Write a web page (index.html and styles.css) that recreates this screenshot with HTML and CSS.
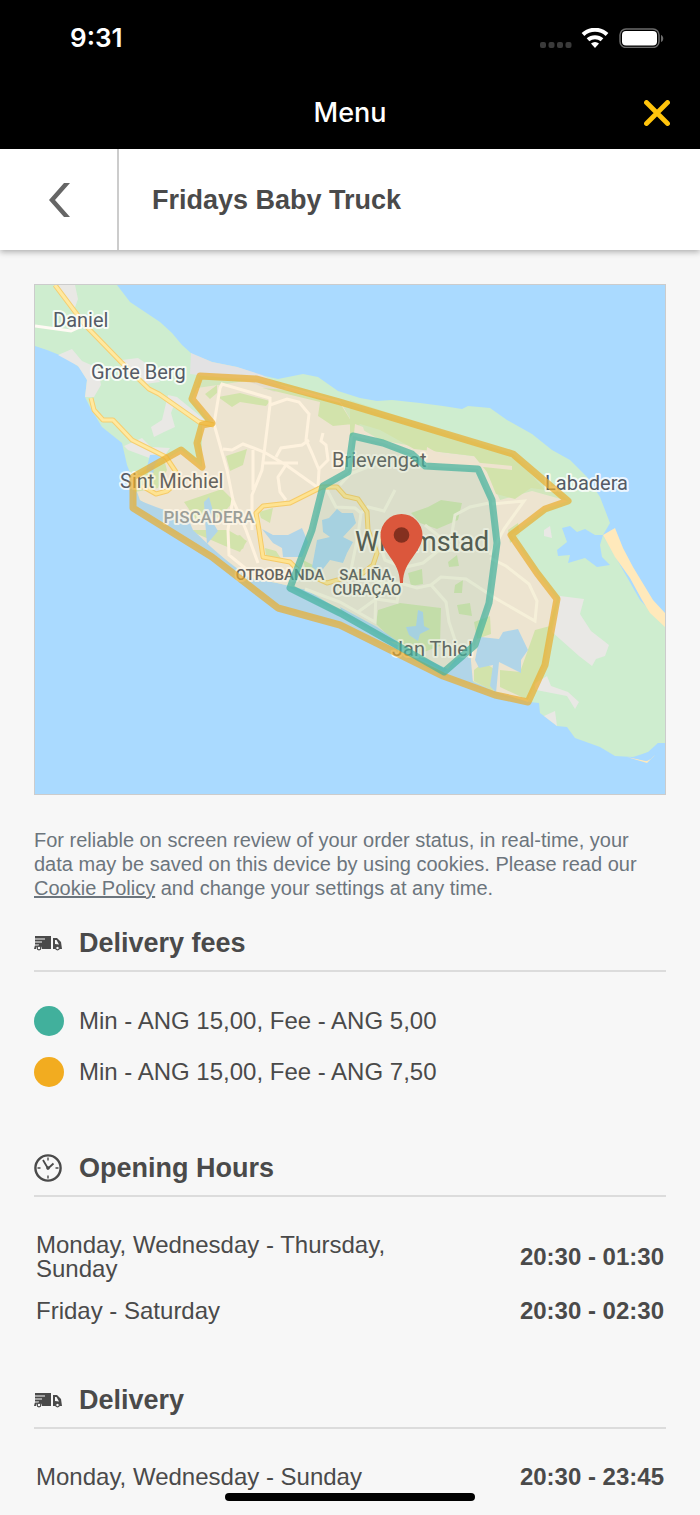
FILE: index.html
```html
<!DOCTYPE html>
<html lang="en">
<head>
    <meta charset="UTF-8">
    <meta name="viewport" content="width=device-width, initial-scale=1.0">
    <title>Fridays Baby Truck</title>
    <link rel="stylesheet" href="styles.css">
</head>
<body>
<svg class="symbols" aria-hidden="true">
    <symbol id="truck" viewBox="0 0 28 16">
        <path fill="#4a4a4a" d="M1 1h16v13H8a3 3 0 0 0-6 0H0l1-4zM19 3h4l4 4 1 7h-9z"/>
        <path fill="#f7f7f7" d="M0 3.400h11v1H0zM0 6.400h8v1H0zM0 9.400h5v1H0zM21 5h1.500l2.500 4.500-4-.5z"/>
        <circle cx="5" cy="13" r="1.800" fill="#f7f7f7" stroke="#4a4a4a" stroke-width="1.200"/>
        <circle cx="23.500" cy="13" r="1.800" fill="#f7f7f7" stroke="#4a4a4a" stroke-width="1.200"/>
    </symbol>
    <symbol id="clock" viewBox="0 0 28 28">
        <g fill="none" stroke="#4a4a4a">
            <circle cx="14" cy="14" r="12.600" stroke-width="2.400"/>
            <path stroke-width="1.400" d="M14 3.500v3M14 21.500v3M3.500 14h3M21.500 14h3"/>
            <path stroke-width="1.800" d="M9 6l5 8.500 5.500-5"/>
        </g>
        <circle cx="14" cy="14" r="1.800" fill="#4a4a4a"/>
    </symbol>
</svg>

<header>
    <div class="status-bar">
        <span class="time">9:31</span>
        <svg width="124" height="20" viewBox="0 0 124 20">
            <g fill="#3a3a3a">
                <rect x="0" y="14" width="6" height="6" rx="2"/>
                <rect x="8.500" y="14" width="6" height="6" rx="2"/>
                <rect x="17" y="14" width="6" height="6" rx="2"/>
                <rect x="25.500" y="14" width="6" height="6" rx="2"/>
            </g>
            <g fill="none" stroke="#fff" stroke-width="4">
                <path d="M43 6.500a17.500 17.500 0 0 1 24 0"/>
                <path d="M48 11.800a10.500 10.500 0 0 1 14 0"/>
            </g>
            <path fill="#fff" d="M51 15.500a6 6 0 0 1 8 0L55 20z"/>
            <rect x="80" y="1" width="39" height="18.500" rx="6" fill="none" stroke="#6b6b6b" stroke-width="1.500"/>
            <rect x="82" y="3" width="35" height="14.500" rx="4" fill="#fff"/>
            <path fill="#6b6b6b" d="M121 7c3 1 3 6 0 7z"/>
        </svg>
    </div>
    <div class="nav-bar">
        <h1>Menu</h1>
        <button class="close" aria-label="Close">
            <svg width="26" height="26" viewBox="0 0 26 26"><path d="M2.500 2.500l21 21M23.500 2.500l-21 21" stroke="#ffc40c" stroke-width="4.800" stroke-linecap="round"/></svg>
        </button>
    </div>
</header>

<div class="title-bar">
    <a class="back" href="#" aria-label="Back">
        <svg width="24" height="36" viewBox="0 0 24 36"><path fill="#666" d="M17 1h6L8 18l15 17h-6L2 18z"/></svg>
    </a>
    <h2>Fridays Baby Truck</h2>
</div>

<main>
    <svg class="map" viewBox="35 285 630 509" role="img" aria-label="Delivery area map">
        <rect x="35" y="285" width="630" height="509" fill="#aadaff"/>
        <!-- island -->
        <path fill="#ceedcf" d="M35 285H117L130 302 145 312 160 322 172 333 182 345 192 354 212 362 237 367 260 375 278 379 303 374 318 377 338 391 360 398 377 401 392 400 420 403 443 406 462 409 468 406 490 408 507 420 532 434 552 450 570 460 587 477 600 497 610 523 603 535 640 600 665 626V743L658 743 655 750 633 757 615 756 600 747 575 738 567 727 557 726 540 713 539 703 530 702 517 698 497 692 473 682 450 670 393 643 360 623 340 610 307 590 277 583 250 578 230 563 208 547 193 533 177 513 153 508 140 500 133 480 127 465 122 443 102 427 90 407 85 397 87 380 80 368 67 358 47 350 35 346z"/>
        <!-- built-up area -->
        <path fill="#edeae5" d="M192 399L197 388 260 379 340 401 353 424 380 440 412 446 440 452 480 457 500 500 532 491 568 501 545 509 511 535 537 573 557 599 545 640 542 665 528 702 497 692 450 670 393 643 340 610 307 590 277 583 250 578 230 563 208 547 193 533 177 513 153 508 140 500 133 480 181 450 202 467 202 425 212 423z"/>
        <!-- scrub and bare ground -->
        <g fill="#e9e8e5">
            <path d="M58 285H75L78 299 74 310 65 297zM58 355L72 349 82 361 98 368 101 385 94 397 85 397 87 380 78 366zM122 360L138 358 150 366 160 382 145 384 124 369zM168 395L177 397 171 413 175 427 164 432 154 437 151 427 162 420zM177 397L205 420 199 424 170 405zM124 446L142 438 151 447 170 448 160 462 128 450z"/>
            <path fill="#e3e2e3" d="M191 353L212 362 237 367 262 375 286 388 274 392 248 381 190 374z"/>
            <path d="M560 596L584 599 580 614 591 631 609 645 605 656 596 659 592 666 579 656 552 632zM534 684L547 676 551 686 568 692 579 702 575 709 567 696 536 690zM544 716L555 711 557 726zM544 530L550 526 552 538 544 536z"/>
        </g>
        <path fill="#ffe9bb" d="M603 535L615 528 623 548 633 567 653 600 665 613V627L650 613 642 600 630 578 615 557zM627 757L647 763 655 755 646 761z"/>
        <path fill="#aadaff" d="M634 758L648 752 658 743 665 743 651 759 647 761z"/>
        <!-- parks -->
        <g fill="#cfe9bc">
            <path d="M262 388L286 390 340 403 353 424 333 426 318 416 320 402zM350 400L513 454 545 490 531 488 515 499 496 494 487 472 474 456 414 449 380 430 360 424 350 438zM205 394L217 385 217 393 210 399zM218 397L240 393 270 401 266 406 240 402 232 407zM226 456L247 449 243 465 230 471zM132 480L163 455 167 470 158 488 135 492zM184 502L222 489 234 501 220 517 197 521zM188 530L228 530 247 541 240 552 225 546zM259 512L273 508 270 523 261 518zM231 537L240 535 246 541 243 549 233 546z"/>
            <path d="M378 610L400 603 441 608 440 646 413 656 393 640 376 624zM411 513L428 507 441 500 462 503 458 520 437 529 420 523zM408 573L422 569 423 584 411 586zM455 585L463 580 462 593 454 593zM457 605L470 603 472 616 459 614zM448 562L457 555 459 566 449 567zM474 622L490 616 491 634 477 639zM474 670L484 662 494 669 493 691 474 681zM535 630L550 626 543 665 528 700 500 687 500 670 520 672zM508 530L518 523 520 535 510 543zM265 548L276 551 282 560 266 556zM303 560L315 566 317 577 306 572z"/>
        </g>
        <path fill="#efe9e4" d="M427 447L441 455 460 461 512 466 512 470 464 465 440 465 426 461zM355 424L363 427 366 437 354 434z"/>
        <!-- lagoons -->
        <g fill="#aadaff">
            <path d="M562 528L570 526 577 532 585 529 595 535 603 535 600 545 602 557 610 565 597 567 585 558 568 563 570 555 558 556 557 550 567 542z"/>
            <path d="M138 500L156 507 170 512 187 516 193 530 211 547 226 560 242 575 272 586 295 592 340 615 340 622 280 607 210 555 150 516zM204 502L209 497 213 511 212 521 218 531 207 544 205 520zM150 455L164 454 155 464 153 474 146 471z"/>
            <path d="M262 529L273 535 288 535 302 528 308 542 302 557 283 557 282 548 273 543zM322 520L329 518 337 509 342 513 353 513 356 523 343 537 353 542 347 553 343 563 330 560 320 573 312 567 317 540 330 537 323 532z"/>
            <path d="M418 610L423 612 424 626 430 629 420 634 418 641 409 635 406 627 416 626zM481 637L499 639 503 632 518 629 528 650 521 660 521 673 499 662 496 693 490 686 493 665 479 668 475 660 478 645zM377 627L340 607 344 617 390 641 400 643zM455 660L470 650 473 683 446 671z"/>
        </g>
        <!-- minor roads -->
        <g fill="none" stroke="#fffaf4" stroke-width="3">
            <path d="M35 326L71 331 82 326M214 424L220 388 222 384 270 398 270 405 262 470 252 495 252 530M214 424L227 470 233 500 246 530 258 563M270 405L287 399 299 402 309 414 306 440 312 453 319 470 318 486M223 449L232 450 243 444 264 452 286 465 317 487M276 457L281 448 302 445 309 440M262 463H298M286 465L278 477 280 492 286 500M253 450L253 490M323 433L321 441 326 445 328 460 318 470M233 498L228 530 229 555 245 568"/>
            <path stroke="#f6f8ef" d="M325 486L336 507 355 508 361 513 368 507 384 511 395 490M340 485L350 474 385 460M492 504L524 501 504 529 490 555M361 513L358 535 350 575M355 570L380 583 400 583 417 588 431 585 446 602 449 622 455 640M431 585L441 577 466 579 495 598 535 621 537 601 529 584 506 566 490 558M406 567L423 563 438 551 455 550M376 590L375 622 340 602 305 589M400 586L397 602 376 599M376 599L358 612M425 525L450 545 455 515 470 507 489 503M375 530L385 560 400 566"/>
        </g>
        <!-- main roads -->
        <g fill="none" stroke="#ffe9a0" stroke-width="3" stroke-linejoin="round">
            <path stroke="#f6ce70" stroke-width="5" d="M55 285L85 325 121 362 149 389 159 394 199 422 214 425M91 398L94 410 103 420 113 420 132 440 166 457 176 472 180 480 167 491 156 494 142 486M298 570L290 562 263 557 259 530 256 513 263 506 290 503 322 487 337 487 345 496 358 499 367 512 368 530 377 553 373 565 363 573 327 583 318 579"/>
            <path d="M55 285L85 325 121 362 149 389 159 394 199 422 214 425M91 398L94 410 103 420 113 420 132 440 166 457 176 472 180 480 167 491 156 494 142 486M298 570L290 562 263 557 259 530 256 513 263 506 290 503 322 487 337 487 345 496 358 499 367 512 368 530 377 553 373 565 363 573 327 583 318 579"/>
        </g>
        <!-- place names -->
        <g class="places">
            <text x="53" y="327">Daniel</text>
            <text x="91" y="379">Grote Berg</text>
            <text x="120" y="488">Sint Michiel</text>
            <text x="332" y="467">Brievengat</text>
            <text x="545" y="490">Labadera</text>
            <text x="392" y="656">Jan Thiel</text>
            <text x="355" y="551" class="city">Willemstad</text>
            <text x="209" y="523" class="district faint">PISCADERA</text>
            <text x="280" y="580" class="district">OTROBANDA</text>
            <text x="367" y="580" class="district">SALIÑA,</text>
            <text x="367" y="595" class="district">CURAÇAO</text>
        </g>
        <!-- delivery zones -->
        <path class="zone zone-far" d="M200 376L257 379 340 402 513 454 568 501 545 509 511 535 537 573 557 599 545 665 528 702 495 695 443 676 340 625 278 608 212 557 133 508 133 477 181 450 202 467 197 443 202 425 212 423 192 399z"/>
        <path class="zone zone-near" d="M353 436L383 443 412 454 425 466 478 469 492 500 497 543 489 603 475 645 444 672 340 613 290 588 312 530 323 486 348 472z"/>
        <!-- restaurant pin -->
        <path fill="#db573c" d="M400 583C400 560 380.500 553 380.500 535a21 21 0 0 1 42 0C422.500 553 403 560 403 583z"/>
        <circle cx="401.500" cy="535" r="7.800" fill="#84301f"/>
    </svg>

    <p class="notice">For reliable on screen review of your order status, in real-time, your data may be saved on this device by using cookies. Please read our <a href="#">Cookie Policy</a> and change your settings at any time.</p>

    <section>
        <h3><svg class="icon"><use href="#truck"/></svg>Delivery fees</h3>
        <ul class="fees">
            <li><span class="dot near"></span>Min - ANG 15,00, Fee - ANG 5,00</li>
            <li><span class="dot far"></span>Min - ANG 15,00, Fee - ANG 7,50</li>
        </ul>
    </section>

    <section>
        <h3><svg class="icon"><use href="#clock"/></svg>Opening Hours</h3>
        <table>
            <tr>
                <th scope="row">Monday, Wednesday - Thursday, Sunday</th>
                <td>20:30 - 01:30</td>
            </tr>
            <tr>
                <th scope="row">Friday - Saturday</th>
                <td>20:30 - 02:30</td>
            </tr>
        </table>
    </section>

    <section>
        <h3><svg class="icon"><use href="#truck"/></svg>Delivery</h3>
        <table>
            <tr>
                <th scope="row">Monday, Wednesday - Sunday</th>
                <td>20:30 - 23:45</td>
            </tr>
        </table>
    </section>
</main>

<div class="home-indicator"></div>
</body>
</html>
```
FILE: styles.css
```css
* {
    box-sizing: border-box;
}

body {
    margin: 0;
    background: #f7f7f7;
    color: #4a4a4a;
    font-family: "Liberation Sans", Arial, sans-serif;
    font-size: 24px;
    line-height: 24px;
}

h1, h2, h3, p, ul {
    margin: 0;
    padding: 0;
}

.symbols {
    display: none;
}

/* phone header */
header {
    background: #000;
    color: #fff;
    font-family: Inter, "Liberation Sans", sans-serif;
}

.status-bar {
    display: flex;
    justify-content: space-between;
    align-items: center;
    height: 76px;
    padding: 0 36px 0 70px;
}

.time {
    font-size: 26px;
    font-weight: 600;
}

.nav-bar {
    display: grid;
    grid-template-columns: 1fr auto 1fr;
    align-items: center;
    height: 73px;
    padding: 0 30px;
}

h1 {
    grid-column: 2;
    font-size: 27px;
    font-weight: 500;
}

.close {
    justify-self: end;
    padding: 0;
    border: none;
    background: none;
    cursor: pointer;
}

.close svg, .back svg, .map {
    display: block;
}

.title-bar {
    display: flex;
    height: 101px;
    background: #fff;
    box-shadow: 0 2px 6px rgba(0, 0, 0, 0.3);
}

.back {
    display: flex;
    align-items: center;
    justify-content: center;
    width: 119px;
    border-right: 2px solid #ccc;
}

h2 {
    align-self: center;
    padding-left: 33px;
    font-size: 27px;
}

main {
    padding: 34px 34px 18px;
}

/* map */
.map {
    width: 100%;
    border: 1px solid #ccc;
}

.places {
    font-family: Roboto, sans-serif;
    font-size: 20px;
    fill: #555b66;
    stroke: rgba(255, 255, 255, 0.8);
    stroke-width: 4px;
    stroke-linejoin: round;
    paint-order: stroke;
}

.city {
    font-size: 27px;
    fill: #454b50;
}

.district {
    font-size: 15px;
    font-weight: 500;
    text-anchor: middle;
}

.faint {
    font-size: 17px;
    fill: #919ca6;
}

.zone {
    fill-opacity: 0.1;
    stroke-opacity: 0.7;
    stroke-width: 7;
    stroke-linejoin: round;
}

.zone-far {
    fill: #f2ac20;
    stroke: #e9ac2c;
}

.zone-near {
    fill: #41b09c;
    stroke: #41b09c;
}

.notice {
    margin: 33px 0 27px;
    color: #6c757d;
    font-size: 20px;
}

.notice a {
    color: inherit;
}

/* sections */
h3 {
    display: flex;
    align-items: center;
    gap: 17px;
    padding-bottom: 11px;
    border-bottom: 2px solid #dcdcdc;
    font-size: 27px;
    line-height: 32px;
}

.icon {
    width: 28px;
    height: 28px;
}

.fees {
    list-style: none;
    padding: 34px 0 65px;
}

.fees li {
    display: flex;
    align-items: center;
    gap: 15px;
}

.fees li + li {
    margin-top: 21px;
}

.dot {
    width: 30px;
    height: 30px;
    border-radius: 50%;
}

.near {
    background: #41b09c;
}

.far {
    background: #f2ac20;
}

table {
    width: 100%;
    margin: 27px 0 52px;
    border-collapse: collapse;
}

section:last-child table {
    margin-bottom: 0;
}

th, td {
    padding: 9px 2px;
}

th {
    width: 62%;
    font-weight: normal;
    text-align: left;
}

td {
    font-weight: bold;
    text-align: right;
}

.home-indicator {
    position: fixed;
    bottom: 14px;
    left: 50%;
    width: 250px;
    height: 8px;
    margin-left: -125px;
    border-radius: 4px;
    background: #000;
}
```
